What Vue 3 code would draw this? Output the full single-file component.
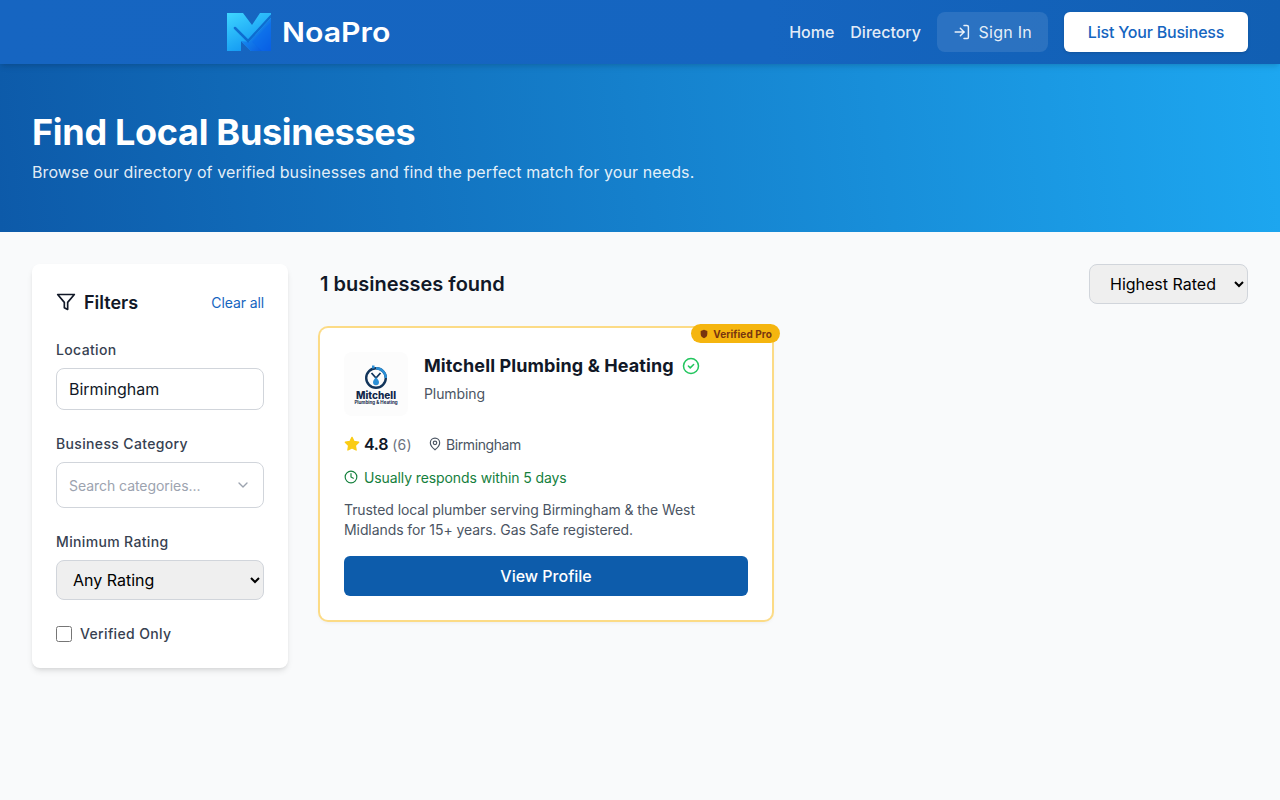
<script setup>
import { ref } from 'vue'

const location = ref('Birmingham')
const rating = ref('any')
const sort = ref('rating')
const verifiedOnly = ref(false)
</script>

<template>
  <div class="page">
    <header class="topbar">
      <div class="brand">
        <svg class="brand-mark" width="44" height="38" viewBox="0 0 44 38">
          <defs>
            <linearGradient id="markA" x1="0" y1="0" x2="0.6" y2="1">
              <stop offset="0" stop-color="#3fd6ff" />
              <stop offset="1" stop-color="#0f93f2" />
            </linearGradient>
            <linearGradient id="markB" x1="0" y1="0" x2="1" y2="1">
              <stop offset="0" stop-color="#1fa8f8" />
              <stop offset="1" stop-color="#0650dc" />
            </linearGradient>
          </defs>
          <path d="M0 0H16L25 12 33 0H44V38H24L14 28V38H0Z" fill="url(#markA)" />
          <path d="M44 5V38H24L14 28 22 29Z" fill="url(#markB)" />
          <path d="M25 29 44 9V38H35Z" fill="#0a6cec" opacity=".5" />
          <path d="M8 15 21 28 44 3" fill="none" stroke="#0b62c9" stroke-width="2.500" opacity=".85" stroke-linecap="round" />
        </svg>
        <span class="brand-name">NoaPro</span>
      </div>
      <nav class="nav">
        <a class="nav-link">Home</a>
        <a class="nav-link">Directory</a>
        <button class="signin">
          <svg width="18" height="18" viewBox="0 0 24 24" fill="none" stroke="currentColor" stroke-width="2" stroke-linecap="round" stroke-linejoin="round">
            <path d="M15 3h4a2 2 0 0 1 2 2v14a2 2 0 0 1-2 2h-4" />
            <polyline points="10 17 15 12 10 7" />
            <line x1="15" y1="12" x2="3" y2="12" />
          </svg>
          Sign In
        </button>
        <button class="list-btn">List Your Business</button>
      </nav>
    </header>

    <section class="hero">
      <h1>Find Local Businesses</h1>
      <p>Browse our directory of verified businesses and find the perfect match for your needs.</p>
    </section>

    <main class="content">
      <aside class="filters">
        <div class="filters-head">
          <h2>
            <svg width="20" height="20" viewBox="0 0 24 24" fill="none" stroke="currentColor" stroke-width="2" stroke-linecap="round" stroke-linejoin="round">
              <polygon points="22 3 2 3 10 12.46 10 19 14 21 14 12.46 22 3" />
            </svg>
            Filters
          </h2>
          <a class="clear">Clear all</a>
        </div>

        <div class="field">
          <label>Location</label>
          <input class="text-input" v-model="location" type="text" />
        </div>

        <div class="field">
          <label>Business Category</label>
          <div class="combo">
            <span>Search categories...</span>
            <svg width="16" height="16" viewBox="0 0 24 24" fill="none" stroke="#9ca3af" stroke-width="2" stroke-linecap="round" stroke-linejoin="round">
              <polyline points="6 9 12 15 18 9" />
            </svg>
          </div>
        </div>

        <div class="field">
          <label>Minimum Rating</label>
          <select class="select" v-model="rating">
            <option value="any">Any Rating</option>
            <option value="4">4+ Stars</option>
            <option value="3">3+ Stars</option>
          </select>
        </div>

        <label class="check">
          <input type="checkbox" v-model="verifiedOnly" />
          <span>Verified Only</span>
        </label>
      </aside>

      <section class="results">
        <div class="results-head">
          <h2>1 businesses found</h2>
          <select class="select sort" v-model="sort">
            <option value="rating">Highest Rated</option>
            <option value="reviews">Most Reviews</option>
          </select>
        </div>

        <div class="grid">
          <article class="card">
            <span class="badge">
              <svg width="10" height="10" viewBox="0 0 24 24" fill="#78350f">
                <path d="M12 2l8 3v7c0 5-3.500 8.500-8 10-4.500-1.500-8-5-8-10V5z" />
              </svg>
              Verified Pro
            </span>

            <div class="card-top">
              <div class="logo">
                <svg width="32" height="26" viewBox="0 0 32 26">
                  <circle cx="16" cy="14" r="9.800" fill="none" stroke="#12355b" stroke-width="2.400" />
                  <path d="M16 4.200a9.800 9.800 0 0 1 9.800 9.800" fill="none" stroke="#2b8fd6" stroke-width="2.400" />
                  <path d="M12 1.500h2.500v3h-2.500z" fill="#2b8fd6" />
                  <path d="M11.500 9l4.500 5 4.500-5" fill="none" stroke="#12355b" stroke-width="1.800" />
                  <path d="M16 13c2 2.500 3 3.800 3 5.200a3 3 0 0 1-6 0c0-1.400 1-2.700 3-5.200z" fill="#2b8fd6" />
                </svg>
                <span class="logo-name">Mitchell</span>
                <span class="logo-sub">Plumbing &amp; Heating</span>
              </div>
              <div class="card-title">
                <div class="name-row">
                  <h3>Mitchell Plumbing &amp; Heating</h3>
                  <svg width="18" height="18" viewBox="0 0 24 24" fill="none" stroke="#22c55e" stroke-width="2" stroke-linecap="round" stroke-linejoin="round">
                    <circle cx="12" cy="12" r="10" />
                    <path d="M8.500 12l2.500 2.500 4.500-4.500" />
                  </svg>
                </div>
                <p class="category">Plumbing</p>
              </div>
            </div>

            <div class="meta">
              <span class="rating">
                <svg width="16" height="16" viewBox="0 0 24 24" fill="#facc15" stroke="#facc15" stroke-width="2" stroke-linejoin="round">
                  <path d="M12 2l3.090 6.260L22 9.270l-5 4.870 1.180 6.880L12 17.770l-6.180 3.250L7 14.140 2 9.270l6.910-1.010z" />
                </svg>
                <b>4.8</b>
                <span class="count">(6)</span>
              </span>
              <span class="place">
                <svg width="14" height="14" viewBox="0 0 24 24" fill="none" stroke="currentColor" stroke-width="2" stroke-linecap="round" stroke-linejoin="round">
                  <path d="M20 10c0 6-8 12-8 12s-8-6-8-12a8 8 0 0 1 16 0z" />
                  <circle cx="12" cy="10" r="3" />
                </svg>
                <span class="place-name">Birmingham</span>
              </span>
            </div>

            <div class="responds">
              <svg width="14" height="14" viewBox="0 0 24 24" fill="none" stroke="currentColor" stroke-width="2" stroke-linecap="round" stroke-linejoin="round">
                <circle cx="12" cy="12" r="10" />
                <polyline points="12 6 12 12 16 14" />
              </svg>
              Usually responds within 5 days
            </div>

            <p class="desc">Trusted local plumber serving Birmingham &amp; the West Midlands for 15+ years. Gas Safe registered.</p>

            <button class="profile-btn">View Profile</button>
          </article>
        </div>
      </section>
    </main>
  </div>
</template>

<style>
body {
  background: #f9fafb;
}
</style>

<style scoped>
.page {
  min-height: 800px;
  background: #f9fafb;
  font-family: Inter, "Liberation Sans", sans-serif;
  color: #111827;
}

.topbar {
  position: relative;
  z-index: 2;
  height: 64px;
  box-sizing: border-box;
  padding: 0 32px 0 227px;
  display: flex;
  align-items: center;
  justify-content: space-between;
  background: linear-gradient(90deg, #1665c1 0%, #1565c0 60%, #115fb3 100%);
  box-shadow: 0 4px 6px -1px rgba(0, 0, 0, .1), 0 2px 4px -2px rgba(0, 0, 0, .1);
}

.brand {
  display: flex;
  align-items: center;
  gap: 11px;
}

.brand-name {
  display: inline-block;
  color: #fff;
  font-size: 27px;
  font-weight: 600;
  transform: scaleX(1.120);
  transform-origin: left center;
}

.nav {
  display: flex;
  align-items: center;
  gap: 16px;
}

.nav-link {
  color: rgba(255, 255, 255, .9);
  font-size: 16px;
  font-weight: 500;
}

.signin {
  height: 40px;
  width: 111px;
  padding: 0 16px;
  display: flex;
  align-items: center;
  gap: 8px;
  border: 0;
  border-radius: 8px;
  background: rgba(255, 255, 255, .1);
  color: rgba(255, 255, 255, .9);
  font: 400 16px Inter, sans-serif;
  letter-spacing: .25px;
  white-space: nowrap;
}

.list-btn {
  width: 184px;
  height: 40px;
  border: 0;
  border-radius: 6px;
  background: #fff;
  color: #1565c0;
  font: 500 16px Inter, sans-serif;
  letter-spacing: -.2px;
  box-shadow: 0 1px 3px rgba(0, 0, 0, .15);
}

.hero {
  height: 168px;
  box-sizing: border-box;
  padding: 48px 32px;
  background: linear-gradient(84deg, #0d5aa9 0%, #1da7f0 100%);
  color: #fff;
}

.hero h1 {
  margin: 0 0 8px;
  font-size: 36px;
  line-height: 40px;
  font-weight: 700;
  letter-spacing: -.3px;
}

.hero p {
  margin: 0;
  font-size: 16px;
  line-height: 24px;
  letter-spacing: .1px;
  color: rgba(255, 255, 255, .9);
}

.content {
  display: flex;
  align-items: flex-start;
  gap: 32px;
  padding: 32px;
}

.filters {
  width: 256px;
  flex-shrink: 0;
  box-sizing: border-box;
  padding: 24px;
  background: #fff;
  border-radius: 8px;
  box-shadow: 0 4px 6px -1px rgba(0, 0, 0, .1), 0 2px 4px -2px rgba(0, 0, 0, .1);
}

.filters-head {
  display: flex;
  align-items: center;
  justify-content: space-between;
  height: 28px;
  margin-bottom: 24px;
}

.filters-head h2 {
  margin: 0;
  display: flex;
  align-items: center;
  gap: 8px;
  font-size: 18px;
  font-weight: 600;
}

.clear {
  color: #1565c0;
  font-size: 14px;
  letter-spacing: -.1px;
}

.field {
  margin-bottom: 24px;
}

.field label {
  display: block;
  margin-bottom: 8px;
  font-size: 14px;
  line-height: 20px;
  font-weight: 500;
  letter-spacing: .35px;
  color: #374151;
}

.text-input {
  display: block;
  width: 100%;
  height: 42px;
  box-sizing: border-box;
  padding: 0 12px;
  border: 1px solid #d1d5db;
  border-radius: 8px;
  background: #fff;
  color: #111827;
  font: 400 16px Inter, sans-serif;
  outline: none;
}

.combo {
  height: 46px;
  box-sizing: border-box;
  padding: 0 12px;
  display: flex;
  align-items: center;
  justify-content: space-between;
  border: 1px solid #d1d5db;
  border-radius: 8px;
  color: #9ca3af;
  font-size: 14px;
  letter-spacing: -.05px;
}

.select {
  display: block;
  width: 100%;
  height: 40px;
  padding: 0 12px;
  border: 1px solid #d1d5db;
  border-radius: 8px;
  background-color: #efefef;
  color: #000;
  font: 400 16px Inter, sans-serif;
}

.check {
  display: flex;
  align-items: center;
  gap: 8px;
  font-size: 14px;
  line-height: 20px;
  font-weight: 500;
  letter-spacing: .35px;
  color: #374151;
}

.check input {
  width: 16px;
  height: 16px;
  margin: 0;
}

.results {
  flex: 1;
  min-width: 0;
}

.results-head {
  display: flex;
  align-items: center;
  justify-content: space-between;
  height: 40px;
  margin-bottom: 24px;
}

.results-head h2 {
  margin: 0;
  font-size: 20px;
  font-weight: 600;
}

.sort {
  width: 159px;
  padding-left: 16px;
}

.grid {
  display: grid;
  grid-template-columns: repeat(2, 1fr);
  gap: 24px;
}

.card {
  position: relative;
  box-sizing: border-box;
  padding: 24px;
  background: #fff;
  border-radius: 8px;
  box-shadow: 0 0 0 2px #fcdb86, 0 2px 4px rgba(0, 0, 0, .08);
}

.badge {
  position: absolute;
  top: -4px;
  right: -8px;
  height: 19px;
  padding: 0 8px;
  display: flex;
  align-items: center;
  gap: 4px;
  border-radius: 999px;
  background: #f5b50f;
  color: #78350f;
  font-size: 10px;
  font-weight: 700;
  letter-spacing: .1px;
}

.card-top {
  display: flex;
  gap: 16px;
  margin-bottom: 16px;
}

.logo {
  width: 64px;
  height: 64px;
  flex-shrink: 0;
  display: flex;
  flex-direction: column;
  align-items: center;
  justify-content: center;
  border-radius: 8px;
  background: #fcfcfc;
  color: #12264a;
}

.logo-name {
  font-size: 10px;
  line-height: 10px;
  font-weight: 800;
}

.logo-sub {
  font-size: 4.500px;
  line-height: 5px;
  font-weight: 700;
  white-space: nowrap;
}

.name-row {
  display: flex;
  align-items: center;
  gap: 8px;
}

.name-row h3 {
  margin: 0;
  font-size: 18px;
  line-height: 28px;
  font-weight: 700;
  letter-spacing: .1px;
}

.category {
  margin: 4px 0 0;
  font-size: 14px;
  line-height: 20px;
  letter-spacing: -.1px;
  color: #4b5563;
}

.meta {
  display: flex;
  align-items: center;
  gap: 16px;
  height: 24px;
  margin-bottom: 11px;
  font-size: 14px;
}

.rating {
  display: flex;
  align-items: center;
  gap: 4px;
}

.rating b {
  font-size: 16px;
  font-weight: 600;
  letter-spacing: -.3px;
}

.count {
  color: #6b7280;
  letter-spacing: .3px;
}

.place {
  display: flex;
  align-items: center;
  gap: 4px;
  color: #4b5563;
}

.place-name {
  letter-spacing: -.4px;
}

.responds {
  display: flex;
  align-items: center;
  gap: 6px;
  height: 20px;
  margin-bottom: 13px;
  font-size: 14px;
  letter-spacing: -.1px;
  color: #15803d;
}

.desc {
  margin: 0 0 16px;
  font-size: 14px;
  line-height: 20px;
  letter-spacing: -.08px;
  color: #4b5563;
}

.profile-btn {
  display: block;
  width: 100%;
  height: 40px;
  border: 0;
  border-radius: 6px;
  background: #0d5cab;
  color: #fff;
  font: 500 16px Inter, sans-serif;
}
</style>
